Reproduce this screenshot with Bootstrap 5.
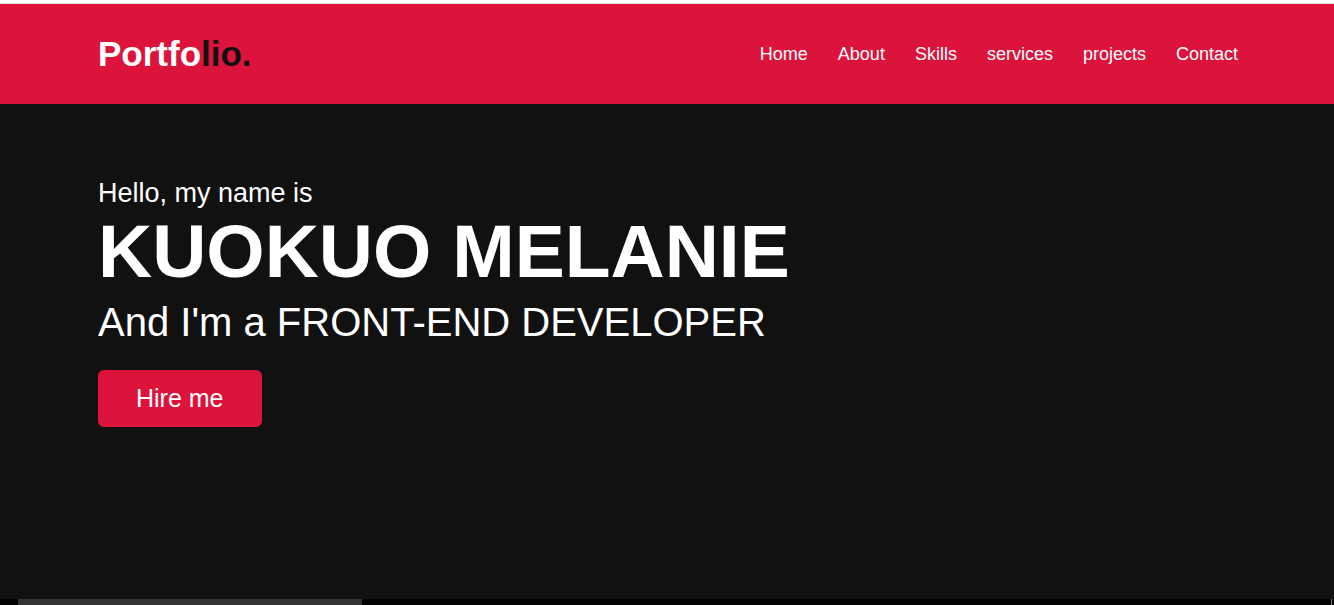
<!DOCTYPE html>
<html lang="en">
<head>
<meta charset="utf-8">
<meta name="viewport" content="width=device-width, initial-scale=1">
<title>Portfolio</title>
<link href="https://cdn.jsdelivr.net/npm/bootstrap@5.3.0/dist/css/bootstrap.min.css" rel="stylesheet">
<style>
  body { font-family: "Liberation Sans", Arial, sans-serif; background: #111; color: #fff; }
  .page-wrap, .site-nav .page-wrap { max-width: 1302px; padding: 0 80px 0 82px; }
  .top-edge { height: 4px; background: #fff; border-bottom: 1px solid #ddd; }
  .site-nav { min-height: 100px; background: crimson; }
  .site-nav .navbar-brand { font-size: 35px; line-height: 40px; font-weight: 600; color: #fff; }
  .site-nav .navbar-brand span { color: #111; }
  .site-nav .navbar-nav { gap: 30px; }
  .site-nav .navbar-nav .nav-link { font-size: 18px; line-height: 20px; font-weight: 500; color: #fff; }
  .hero { padding-top: 74px; }
  .hero-hello { font-size: 27px; line-height: 30px; }
  .hero-name { font-size: 75px; line-height: 86px; font-weight: 600; }
  .hero-role { font-size: 40px; line-height: 48px; }
  .btn-hire { font-size: 25px; line-height: 29px; padding: 12px 36px; border: 2px solid crimson; border-radius: 6px; background: crimson; color: #fff; }
  .btn-hire:hover { background: transparent; border-color: crimson; color: crimson; }
  .scroll-track { height: 6px; padding: 0 2px 0 18px; background: #020204; }
  .scroll-thumb { width: 344px; background: #333; }
  .scroll-end { width: 1px; background: #777; }
  @media (max-width: 800px) {
    .page-wrap, .site-nav .page-wrap { padding: 0 24px; }
    .hero-name { font-size: 48px; line-height: 56px; }
    .hero-role { font-size: 27px; line-height: 30px; }
  }
</style>
</head>
<body class="d-flex flex-column min-vh-100">
  <div class="top-edge"></div>
  <nav class="navbar navbar-expand site-nav p-0">
    <div class="container-fluid page-wrap flex-wrap justify-content-between">
      <a class="navbar-brand p-0 m-0" href="#">Portfo<span>lio.</span></a>
      <ul class="navbar-nav flex-wrap">
        <li class="nav-item"><a class="nav-link p-0" href="#home">Home</a></li>
        <li class="nav-item"><a class="nav-link p-0" href="#about">About</a></li>
        <li class="nav-item"><a class="nav-link p-0" href="#skills">Skills</a></li>
        <li class="nav-item"><a class="nav-link p-0" href="#services">services</a></li>
        <li class="nav-item"><a class="nav-link p-0" href="#projects">projects</a></li>
        <li class="nav-item"><a class="nav-link p-0" href="#contact">Contact</a></li>
      </ul>
    </div>
  </nav>
  <main class="hero flex-grow-1" id="home">
    <div class="container-fluid page-wrap">
      <p class="hero-hello mb-0">Hello, my name is</p>
      <h1 class="hero-name mb-1">KUOKUO MELANIE</h1>
      <p class="hero-role mb-4">And I'm a FRONT-END DEVELOPER</p>
      <button type="button" class="btn btn-hire">Hire me</button>
    </div>
  </main>
  <div class="scroll-track d-flex justify-content-between"><div class="scroll-thumb"></div><div class="scroll-end"></div></div>
  <script src="https://cdn.jsdelivr.net/npm/bootstrap@5.3.0/dist/js/bootstrap.bundle.min.js"></script>
</body>
</html>
